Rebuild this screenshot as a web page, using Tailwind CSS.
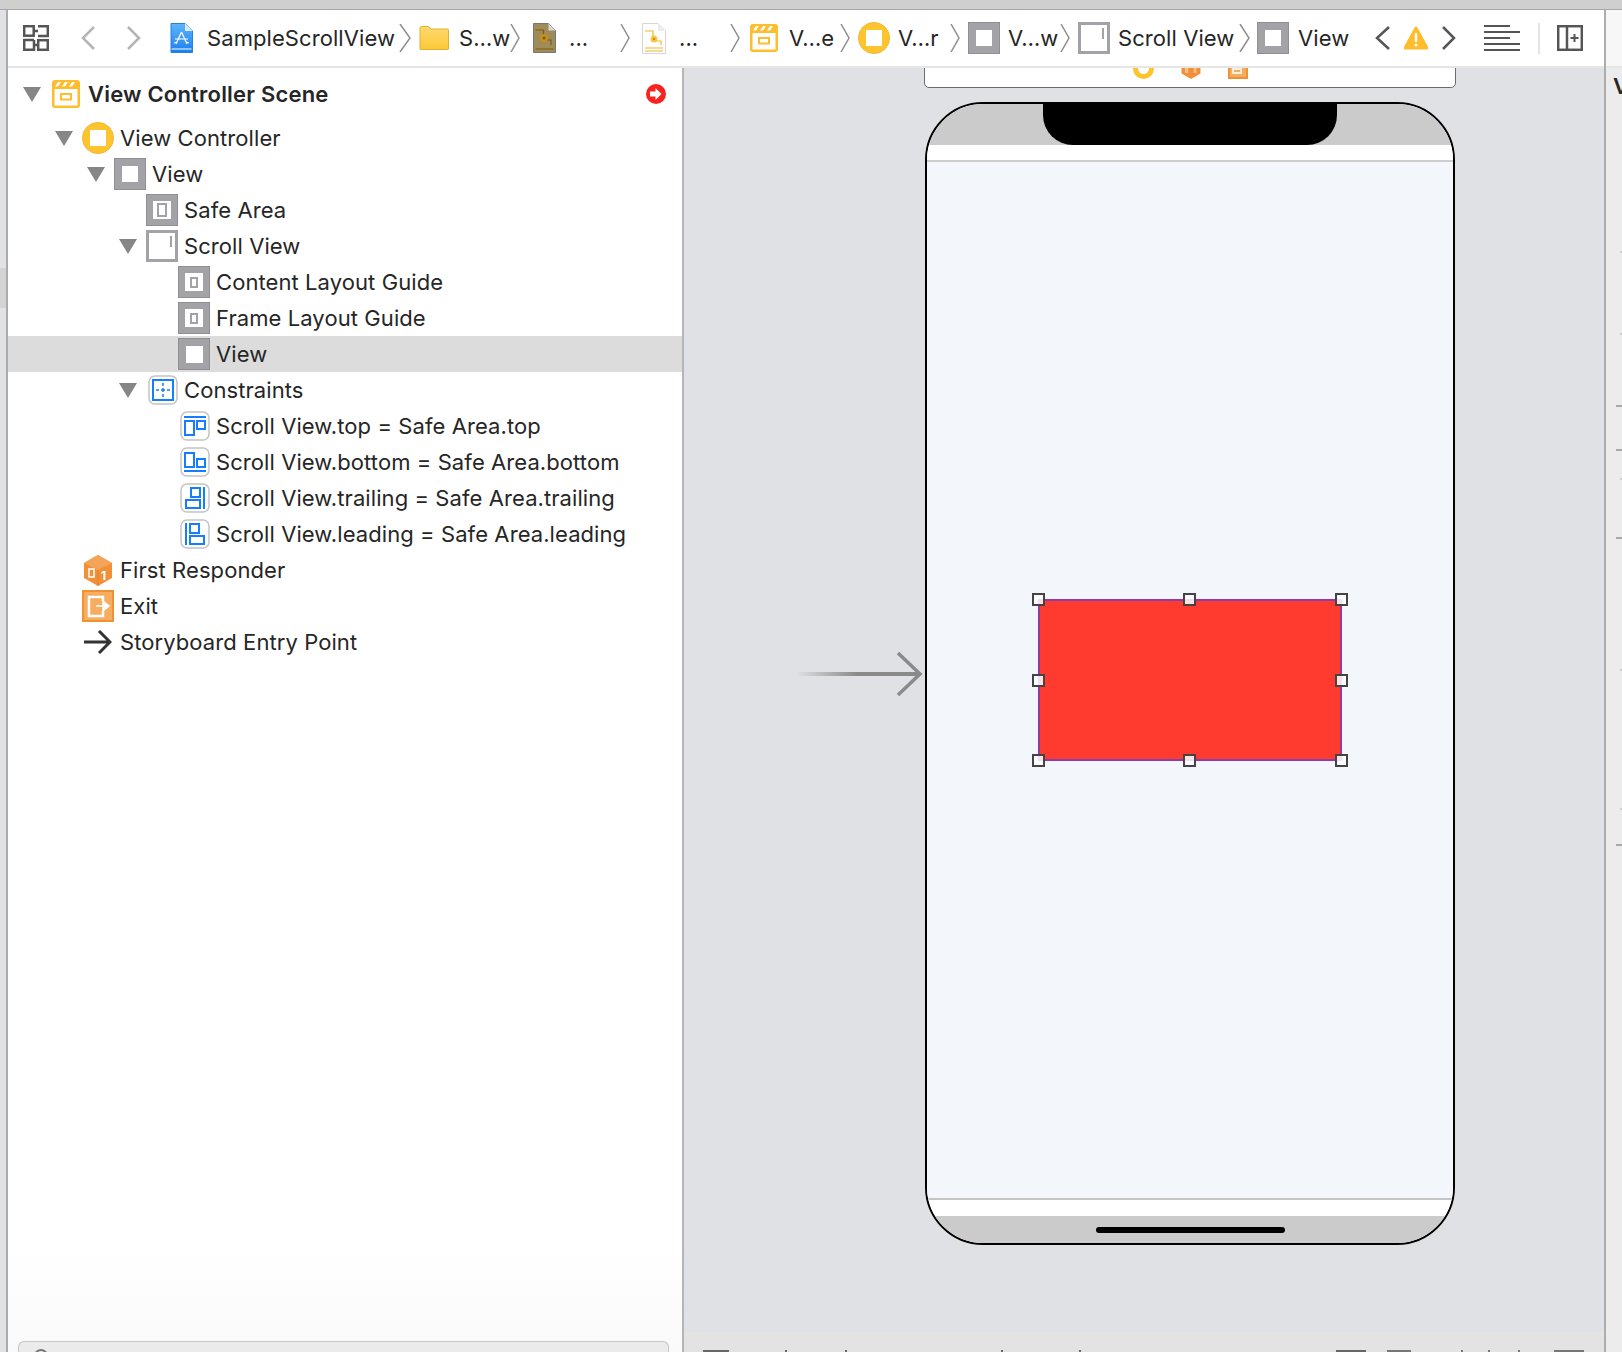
<!DOCTYPE html>
<html lang="en">
<head>
  <meta charset="UTF-8" />
  <title>SampleScrollView storyboard</title>
  <script src="https://cdn.jsdelivr.net/npm/@tailwindcss/browser@4"></script>
</head>
<body class="w-[1622px] h-[1352px] overflow-hidden bg-white text-[#262626] font-['Inter',sans-serif] text-[22px] tracking-[0.08px]">
<div class="flex flex-col h-full">

  <!-- window top edge -->
  <div class="h-[10px] shrink-0 bg-[#cfcfcf] border-b border-[#a8a8a8]"></div>

  <div class="flex flex-1 min-h-0">
    <!-- left strip -->
    <div class="w-[8px] shrink-0 bg-[#e1e2e5] border-r-2 border-[#ababab] flex flex-col">
      <div class="mt-[258px] h-[40px] bg-[#d4d4d4]"></div>
    </div>

    <div class="w-[1596px] shrink-0 flex flex-col">
      <!-- jump bar -->
      <div class="h-[58px] shrink-0 border-b-2 border-[#e6e6e6] flex items-center whitespace-nowrap">
        <svg class="ml-[15px] shrink-0" width="26" height="26" viewBox="0 0 26 26" fill="none" stroke="#555" stroke-width="2.500"><rect x="1.200" y="1.200" width="9.500" height="9.500"/><path d="M15 1.200h9.800v9.800h-9.800M15 6h-4"/><path d="M11 15v9.800h-9.800v-9.800h9.800M11 20h4"/><rect x="15.200" y="15.200" width="9.600" height="9.600"/></svg>
        <svg class="ml-[32px] shrink-0" width="14" height="24" viewBox="0 0 14 24" fill="none" stroke="#b4b4b4" stroke-width="2.500"><path d="M13 1 2 12l11 11"/></svg>
        <svg class="ml-[32px] shrink-0" width="14" height="24" viewBox="0 0 14 24" fill="none" stroke="#b4b4b4" stroke-width="2.500"><path d="M1 1l11 11L1 23"/></svg>
        <svg class="ml-[29px] shrink-0" width="23" height="30" viewBox="0 0 23 30"><defs><linearGradient id="pj" x1="0" y1="0" x2="0" y2="1"><stop offset="0" stop-color="#5fb5fb"/><stop offset="1" stop-color="#1c7ff0"/></linearGradient></defs><path d="M1 .5h14l7.500 7.500v21.500h-21.500z" fill="url(#pj)" stroke="#2a7fdc"/><path d="M15 .5v7.500h7.500z" fill="#d9ecfd"/><path d="M11.500 9 6 21M11.500 9 17 21M5 16h13M4 20l3-1M19 20l-3-1" stroke="#fff" stroke-width="1.200" fill="none"/><path d="M1.500 26h20" stroke="#fff" stroke-width="1"/></svg>
        <span class="ml-[14px] w-[185px] shrink-0">SampleScrollView</span>
        <svg class="ml-[7px] shrink-0" width="12" height="28" viewBox="0 0 12 28" fill="none" stroke="#8e8e8e" stroke-width="1.500"><path d="M1 0 11 14 1 28"/></svg>
        <svg class="ml-[8px] shrink-0" width="30" height="24" viewBox="0 0 30 24"><defs><linearGradient id="fd" x1="0" y1="0" x2="0" y2="1"><stop offset="0" stop-color="#fedb6e"/><stop offset="1" stop-color="#fcc838"/></linearGradient></defs><path d="M1 23V2q0-1.500 1.500-1.500h7L12 3h16.500q1 0 1 1v19q0 .5-1 .5H2q-1 0-1-.5z" fill="url(#fd)" stroke="#e5ae2c"/></svg>
        <span class="ml-[10px] w-[46px] shrink-0">S…w</span>
        <svg class="ml-[5px] shrink-0" width="10" height="28" viewBox="0 0 10 28" fill="none" stroke="#8e8e8e" stroke-width="1.500"><path d="M1 0 9 14 1 28"/></svg>
        <svg class="ml-[13px] shrink-0" width="23" height="30" viewBox="0 0 23 30"><path d="M.5.5h15l7 7v22H.5z" fill="#a08c58" stroke="#777"/><path d="M15.500.5v7h7z" fill="#d8d8d8"/><path d="M2.500 7h8v5M2.500 26h18M12 17l6 0v5" stroke="#7a5a14" stroke-width="1.200" fill="none"/><circle cx="11" cy="15" r="4" fill="#c5901f"/><circle cx="11" cy="15" r="1.500" fill="#7a5a14"/></svg>
        <span class="ml-[13px] w-[16px] shrink-0">...</span>
        <svg class="ml-[35px] shrink-0" width="10" height="28" viewBox="0 0 10 28" fill="none" stroke="#8e8e8e" stroke-width="1.500"><path d="M1 0 9 14 1 28"/></svg>
        <svg class="ml-[12px] shrink-0" width="24" height="31" viewBox="0 0 24 31"><path d="M.5.5h15.500l7.500 7.500v22.500H.5z" fill="#fff" stroke="#d6d6d6"/><path d="M16 .5V8h7.500z" fill="#ececec"/><path d="M3 8h8v5M3 25h18M3 28h18M13 18h6v4" stroke="#f4b62c" stroke-width="1.200" fill="none"/><circle cx="12" cy="16" r="3.500" fill="#f7c748"/><circle cx="12" cy="16" r="1.300" fill="#c98f10"/></svg>
        <span class="ml-[13px] w-[15px] shrink-0">...</span>
        <svg class="ml-[36px] shrink-0" width="10" height="28" viewBox="0 0 10 28" fill="none" stroke="#8e8e8e" stroke-width="1.500"><path d="M1 0 9 14 1 28"/></svg>
        <svg class="ml-[10px] shrink-0" width="28" height="28" viewBox="0 0 28 28"><rect width="28" height="28" rx="3" fill="#fdbd2c"/><rect x="2.500" y="9" width="23" height="16.500" fill="#fff"/><path d="M3 6.500 6 2h3L6 6.500zM10 6.500 13 2h3l-3 4.500zM17 6.500 20 2h3l-3 4.500z" fill="#fff"/><rect x="9" y="14" width="10" height="5.500" fill="none" stroke="#fdbd2c" stroke-width="2"/></svg>
        <span class="ml-[11px] w-[44px] shrink-0">V…e</span>
        <svg class="ml-[7px] shrink-0" width="10" height="28" viewBox="0 0 10 28" fill="none" stroke="#8e8e8e" stroke-width="1.500"><path d="M1 0 9 14 1 28"/></svg>
        <div class="ml-[8px] w-[32px] h-[32px] shrink-0 rounded-full bg-[#fec42e] border border-[#f7b52a] flex items-center justify-center"><div class="w-4 h-4 bg-white"></div></div>
        <span class="ml-[8px] w-[41px] shrink-0">V…r</span>
        <svg class="ml-[11px] shrink-0" width="10" height="28" viewBox="0 0 10 28" fill="none" stroke="#8e8e8e" stroke-width="1.500"><path d="M1 0 9 14 1 28"/></svg>
        <div class="ml-[8px] w-[32px] h-[32px] shrink-0 bg-[#a2a2a7] border border-[#8e8e93] flex items-center justify-center"><div class="w-4 h-4 bg-white"></div></div>
        <span class="ml-[8px] w-[49px] shrink-0">V…w</span>
        <svg class="ml-[3px] shrink-0" width="10" height="28" viewBox="0 0 10 28" fill="none" stroke="#8e8e8e" stroke-width="1.500"><path d="M1 0 9 14 1 28"/></svg>
        <div class="ml-[8px] w-[32px] h-[32px] shrink-0 bg-white border-[3px] border-[#a2a2a7] flex justify-end"><div class="mt-[3px] mr-[3px] w-[2px] h-[11px] bg-[#a2a2a7]"></div></div>
        <span class="ml-[8px] w-[114px] shrink-0">Scroll View</span>
        <svg class="ml-[7px] shrink-0" width="11" height="28" viewBox="0 0 11 28" fill="none" stroke="#8e8e8e" stroke-width="1.500"><path d="M1 0 10 14 1 28"/></svg>
        <div class="ml-[7px] w-[32px] h-[32px] shrink-0 bg-[#a2a2a7] border border-[#8e8e93] flex items-center justify-center"><div class="w-4 h-4 bg-white"></div></div>
        <span class="ml-[9px] w-[48px] shrink-0">View</span>
        <svg class="ml-[29px] shrink-0" width="15" height="24" viewBox="0 0 15 24" fill="none" stroke="#555" stroke-width="2.500"><path d="M14 1 2 12l12 11"/></svg>
        <svg class="ml-[14px] shrink-0" width="24" height="24" viewBox="0 0 24 24"><path d="M12 2 23 22H1z" fill="#fdbd2c" stroke="#fdbd2c" stroke-width="3" stroke-linejoin="round"/><rect x="10.800" y="7" width="2.400" height="9" rx="1" fill="#fff"/><circle cx="12" cy="19" r="1.500" fill="#fff"/></svg>
        <svg class="ml-[14px] shrink-0" width="14" height="24" viewBox="0 0 14 24" fill="none" stroke="#555" stroke-width="2.500"><path d="M1 1l11 11L1 23"/></svg>
        <svg class="ml-[28px] shrink-0" width="36" height="26" viewBox="0 0 36 26" fill="none" stroke="#555" stroke-width="2"><path d="M0 1h26M0 7h36M0 13h26M0 19h36M0 25h36"/></svg>
        <div class="ml-[18px] w-[2px] h-[31px] shrink-0 bg-[#e4e4e4]"></div>
        <svg class="ml-[17px] shrink-0" width="26" height="26" viewBox="0 0 26 26" fill="none" stroke="#555" stroke-width="2.500"><rect x="1.200" y="1.200" width="23.600" height="23.600"/><path d="M10 1v24"/><path d="M13.500 13h8M17.500 9v8" stroke-width="2"/></svg>
      </div>

      <div class="flex flex-1 min-h-0">
        <!-- document outline -->
        <div class="w-[676px] shrink-0 border-r-2 border-[#b5b5b5] flex flex-col bg-gradient-to-b from-white from-[92%] to-[#fafafa]">
          <div class="mt-2 h-9 flex items-center pl-[15px] font-semibold tracking-[0.2px]">
            <svg width="18" height="15" viewBox="0 0 18 15"><path d="M0 0h18L9 15z" fill="#868686"/></svg>
            <svg class="ml-[11px]" width="28" height="28" viewBox="0 0 28 28"><rect width="28" height="28" rx="3" fill="#fdbd2c"/><rect x="2.500" y="9" width="23" height="16.500" fill="#fff"/><path d="M3 6.500 6 2h3L6 6.500zM10 6.500 13 2h3l-3 4.500zM17 6.500 20 2h3l-3 4.500z" fill="#fff"/><rect x="9" y="14" width="10" height="5.500" fill="none" stroke="#fdbd2c" stroke-width="2"/></svg>
            <span class="ml-[8px]">View Controller Scene</span>
            <svg class="ml-auto mr-[16px]" width="20" height="20" viewBox="0 0 20 20"><circle cx="10" cy="10" r="10" fill="#f8231f"/><path d="M4 7.500h5.500V4l6 6-6 6v-3.500H4z" fill="#fff"/></svg>
          </div>
          <div class="mt-2 h-9 flex items-center pl-[47px]">
            <svg width="18" height="15" viewBox="0 0 18 15"><path d="M0 0h18L9 15z" fill="#868686"/></svg>
            <div class="ml-[9px] w-[32px] h-[32px] rounded-full bg-[#fec42e] border border-[#f7b52a] flex items-center justify-center"><div class="w-4 h-4 bg-white"></div></div>
            <span class="ml-[6px]">View Controller</span>
          </div>
          <div class="h-9 flex items-center pl-[79px]">
            <svg width="18" height="15" viewBox="0 0 18 15"><path d="M0 0h18L9 15z" fill="#868686"/></svg>
            <div class="ml-[9px] w-[32px] h-[32px] bg-[#a2a2a7] border border-[#8e8e93] flex items-center justify-center"><div class="w-4 h-4 bg-white"></div></div>
            <span class="ml-[6px]">View</span>
          </div>
          <div class="h-9 flex items-center pl-[138px]">
            <div class="w-[32px] h-[32px] bg-[#a2a2a7] border border-[#8e8e93] flex items-center justify-center"><div class="w-[18px] h-[18px] bg-white flex items-center justify-center"><div class="w-[10px] h-[14px] border-2 border-[#a2a2a7]"></div></div></div>
            <span class="ml-[6px]">Safe Area</span>
          </div>
          <div class="h-9 flex items-center pl-[111px]">
            <svg width="18" height="15" viewBox="0 0 18 15"><path d="M0 0h18L9 15z" fill="#868686"/></svg>
            <div class="ml-[9px] w-[32px] h-[32px] bg-white border-[3px] border-[#a2a2a7] flex justify-end"><div class="mt-[3px] mr-[3px] w-[2px] h-[11px] bg-[#a2a2a7]"></div></div>
            <span class="ml-[6px]">Scroll View</span>
          </div>
          <div class="h-9 flex items-center pl-[170px]">
            <div class="w-[32px] h-[32px] bg-[#a2a2a7] border border-[#8e8e93] flex items-center justify-center"><div class="w-[18px] h-[18px] bg-white flex items-center justify-center"><div class="w-[8px] h-[11px] border-2 border-[#a2a2a7]"></div></div></div>
            <span class="ml-[6px]">Content Layout Guide</span>
          </div>
          <div class="h-9 flex items-center pl-[170px]">
            <div class="w-[32px] h-[32px] bg-[#a2a2a7] border border-[#8e8e93] flex items-center justify-center"><div class="w-[18px] h-[18px] bg-white flex items-center justify-center"><div class="w-[8px] h-[11px] border-2 border-[#a2a2a7]"></div></div></div>
            <span class="ml-[6px]">Frame Layout Guide</span>
          </div>
          <div class="h-9 flex items-center pl-[170px] bg-[#dcdcdc]">
            <div class="w-[32px] h-[32px] bg-[#a2a2a7] border border-[#8e8e93] flex items-center justify-center"><div class="w-[17px] h-[17px] bg-white"></div></div>
            <span class="ml-[6px]">View</span>
          </div>
          <div class="h-9 flex items-center pl-[111px]">
            <svg width="18" height="15" viewBox="0 0 18 15"><path d="M0 0h18L9 15z" fill="#868686"/></svg>
            <svg class="ml-[11px]" width="30" height="30" viewBox="0 0 30 30" fill="none"><rect x="1" y="1" width="28" height="28" rx="6" fill="#fff" stroke="#c4c4c4" stroke-width="1.500"/><rect x="5" y="5" width="20" height="20" stroke="#147efb" stroke-width="2"/><path d="M15 8v3M15 13v4M15 19v3M8 15h3M13 15h4M19 15h3" stroke="#147efb" stroke-width="1.500"/></svg>
            <span class="ml-[6px]">Constraints</span>
          </div>
          <div class="h-9 flex items-center pl-[172px]">
            <svg width="30" height="30" viewBox="0 0 30 30" fill="none"><rect x="1" y="1" width="28" height="28" rx="6" fill="#fff" stroke="#c4c4c4" stroke-width="1.500"/><path d="M4 6h22" stroke="#147efb" stroke-width="2"/><rect x="5" y="10" width="9" height="14" stroke="#147efb" stroke-width="2"/><rect x="17" y="10" width="8" height="8" stroke="#147efb" stroke-width="2"/></svg>
            <span class="ml-[6px]">Scroll View.top = Safe Area.top</span>
          </div>
          <div class="h-9 flex items-center pl-[172px]">
            <svg width="30" height="30" viewBox="0 0 30 30" fill="none"><rect x="1" y="1" width="28" height="28" rx="6" fill="#fff" stroke="#c4c4c4" stroke-width="1.500"/><path d="M4 24h22" stroke="#147efb" stroke-width="2"/><rect x="5" y="6" width="9" height="14" stroke="#147efb" stroke-width="2"/><rect x="17" y="12" width="8" height="8" stroke="#147efb" stroke-width="2"/></svg>
            <span class="ml-[6px]">Scroll View.bottom = Safe Area.bottom</span>
          </div>
          <div class="h-9 flex items-center pl-[172px]">
            <svg width="30" height="30" viewBox="0 0 30 30" fill="none"><rect x="1" y="1" width="28" height="28" rx="6" fill="#fff" stroke="#c4c4c4" stroke-width="1.500"/><path d="M24 4v22" stroke="#147efb" stroke-width="2"/><rect x="11" y="5" width="9" height="9" stroke="#147efb" stroke-width="2"/><rect x="6" y="17" width="14" height="8" stroke="#147efb" stroke-width="2"/></svg>
            <span class="ml-[6px]">Scroll View.trailing = Safe Area.trailing</span>
          </div>
          <div class="h-9 flex items-center pl-[172px]">
            <svg width="30" height="30" viewBox="0 0 30 30" fill="none"><rect x="1" y="1" width="28" height="28" rx="6" fill="#fff" stroke="#c4c4c4" stroke-width="1.500"/><path d="M6 4v22" stroke="#147efb" stroke-width="2"/><rect x="10" y="5" width="9" height="9" stroke="#147efb" stroke-width="2"/><rect x="10" y="17" width="14" height="8" stroke="#147efb" stroke-width="2"/></svg>
            <span class="ml-[6px]">Scroll View.leading = Safe Area.leading</span>
          </div>
          <div class="h-9 flex items-center pl-[76px]">
            <svg width="28" height="31" viewBox="0 0 28 31"><path d="M14 0 28 8v15l-14 8L0 23V8z" fill="#f0913a"/><path d="M14 0 28 8 14 15 0 8z" fill="#f4a458"/><path d="M14 15v16" stroke="#e07f24" stroke-width="1"/><rect x="5" y="14" width="5" height="8" fill="none" stroke="#fff" stroke-width="1.500"/><text x="17" y="25" font-size="12" font-weight="700" fill="#fff" font-family="Inter, sans-serif">1</text></svg>
            <span class="ml-[8px]">First Responder</span>
          </div>
          <div class="h-9 flex items-center pl-[74px]">
            <svg width="32" height="32" viewBox="0 0 32 32"><rect x="1" y="1" width="30" height="30" fill="#f6ad5f" stroke="#f09233" stroke-width="2"/><path d="M21 11V7H7v19h14v-5" fill="none" stroke="#fff" stroke-width="2.500"/><path d="M14 16h11M21 11l6 5-6 5z" stroke="#fff" stroke-width="1.500" fill="#fff"/></svg>
            <span class="ml-[6px]">Exit</span>
          </div>
          <div class="h-9 flex items-center pl-[76px]">
            <svg width="28" height="24" viewBox="0 0 28 24" fill="none" stroke="#333" stroke-width="3"><path d="M0 12h26M15 1l11 11-11 11"/></svg>
            <span class="ml-[8px]">Storyboard Entry Point</span>
          </div>
          <!-- filter field, cut off by the window -->
          <div class="mt-auto ml-[10px] mr-[13px] h-[11px] bg-[#ebebeb] border border-b-0 border-[#c6c6c6] rounded-t-[6px] pl-[15px] pt-[7px] overflow-hidden">
            <div class="w-[14px] h-[14px] rounded-full border-2 border-[#777]"></div>
          </div>
        </div>

        <!-- canvas -->
        <div class="relative flex-1 bg-[#e0e1e5] overflow-hidden flex flex-col justify-end">
          <!-- scene dock -->
          <div class="absolute left-[240px] top-[-20px] w-[532px] h-[40px] bg-white border border-[#6b6b6b] rounded-b-[5px] flex items-end justify-center gap-[27px] pb-[8px]">
            <div class="w-[21px] h-[21px] rounded-full border-[5px] border-[#fec42e] bg-white"></div>
            <svg width="20" height="21" viewBox="0 0 28 31"><path d="M14 0 28 8v15l-14 8L0 23V8z" fill="#f0913a"/><path d="M5 14h5v8H5zM18 14h4v8h-4z" fill="#f6c08c"/></svg>
            <div class="w-[20px] h-[21px] bg-[#f6ad5f] border-2 border-[#f09233] flex items-start justify-start"><div class="mt-[8px] ml-[2px] w-[10px] h-[6px] border-2 border-white/80"></div></div>
          </div>

          <!-- entry point arrow -->
          <svg class="absolute left-[111px] top-[583px]" width="128" height="46" viewBox="0 0 128 46" fill="none"><defs><linearGradient id="ar" x1="0" y1="0" x2="1" y2="0"><stop offset="0" stop-color="#8a8a8a" stop-opacity="0"/><stop offset="0.5" stop-color="#8a8a8a"/></linearGradient></defs><rect x="1" y="21" width="122" height="4" fill="url(#ar)"/><path d="M103 2l22 21-22 21" stroke="#8a8a8a" stroke-width="3.500"/></svg>

          <!-- device -->
          <div class="absolute left-[241px] top-[34px] w-[530px] h-[1143px] rounded-[58px] border-2 border-black overflow-hidden flex flex-col bg-white">
            <div class="h-[41px] shrink-0 bg-[#cbcbcb] flex justify-center">
              <div class="w-[294px] h-[41px] bg-black rounded-b-[30px]"></div>
            </div>
            <div class="h-[15px] shrink-0 bg-white border-b-2 border-[#cdcdcd] box-content"></div>
            <div class="flex-1 bg-[#f3f7fc] border-b-2 border-[#c4c4c4]"></div>
            <div class="h-[16px] shrink-0 bg-white"></div>
            <div class="h-[27px] shrink-0 bg-[#cbcbcb] flex justify-center">
              <div class="mt-[11px] w-[189px] h-[6px] bg-black rounded-full"></div>
            </div>
          </div>

          <!-- selected red view with handles -->
          <div class="absolute left-[354px] top-[531px] w-[304px] h-[162px] bg-[#ff3b30] border-2 border-[#8f3aa6]">
            <div class="absolute left-[-8px] top-[-8px] w-[13px] h-[13px] border-2 border-[#444] bg-white/85"></div>
            <div class="absolute left-[143px] top-[-8px] w-[13px] h-[13px] border-2 border-[#444] bg-white/85"></div>
            <div class="absolute left-[295px] top-[-8px] w-[13px] h-[13px] border-2 border-[#444] bg-white/85"></div>
            <div class="absolute left-[-8px] top-[73px] w-[13px] h-[13px] border-2 border-[#444] bg-white/85"></div>
            <div class="absolute left-[295px] top-[73px] w-[13px] h-[13px] border-2 border-[#444] bg-white/85"></div>
            <div class="absolute left-[-8px] top-[153px] w-[13px] h-[13px] border-2 border-[#444] bg-white/85"></div>
            <div class="absolute left-[143px] top-[153px] w-[13px] h-[13px] border-2 border-[#444] bg-white/85"></div>
            <div class="absolute left-[295px] top-[153px] w-[13px] h-[13px] border-2 border-[#444] bg-white/85"></div>
          </div>

          <!-- canvas bottom bar, cut off by the window -->
          <div class="relative h-[20px] shrink-0 bg-[#e3e3e3] flex items-end pl-[19px]">
            <div class="w-[26px] h-[2px] bg-[#666]"></div>
            <div class="ml-[56px] w-[2px] h-[2px] bg-[#666]"></div>
            <div class="ml-[58px] w-[2px] h-[2px] bg-[#666]"></div>
            <div class="ml-[154px] w-[2px] h-[2px] bg-[#666]"></div>
            <div class="ml-[76px] w-[2px] h-[2px] bg-[#666]"></div>
            <div class="ml-[255px] w-[30px] h-[2px] bg-[#666]"></div>
            <div class="ml-[21px] w-[24px] h-[2px] bg-[#777]"></div>
            <div class="ml-[50px] w-[2px] h-[2px] bg-[#777]"></div>
            <div class="ml-[25px] w-[2px] h-[2px] bg-[#777]"></div>
            <div class="ml-[28px] w-[2px] h-[2px] bg-[#777]"></div>
            <div class="ml-[34px] w-[30px] h-[2px] bg-[#777]"></div>
          </div>
        </div>
      </div>
    </div>

    <!-- inspector, mostly off-window -->
    <div class="flex-1 border-l-2 border-[#adadad] bg-[#ececec] overflow-hidden">
      <div class="h-[58px] bg-[#f7f7f7] border-b-2 border-[#e6e6e6]"></div>
      <div class="pl-[7px] h-[36px] font-semibold leading-[36px] whitespace-nowrap">V</div>
      <div class="flex flex-col items-end">
        <div class="mt-[147px] w-[2px] h-[2px] bg-[#cfcfcf]"></div>
        <div class="mt-[80px] w-[2px] h-[2px] bg-[#cfcfcf]"></div>
        <div class="mt-[70px] w-[6px] h-[2px] bg-[#a8a8a8]"></div>
        <div class="mt-[42px] w-[6px] h-[2px] bg-[#a8a8a8]"></div>
        <div class="mt-[27px] w-[2px] h-[2px] bg-[#cfcfcf]"></div>
        <div class="mt-[57px] w-[6px] h-[2px] bg-[#a8a8a8]"></div>
        <div class="mt-[130px] w-[2px] h-[2px] bg-[#cfcfcf]"></div>
        <div class="mt-[137px] w-[2px] h-[2px] bg-[#cfcfcf]"></div>
        <div class="mt-[34px] w-[6px] h-[2px] bg-[#a8a8a8]"></div>
      </div>
    </div>
  </div>
</div>
</body>
</html>
